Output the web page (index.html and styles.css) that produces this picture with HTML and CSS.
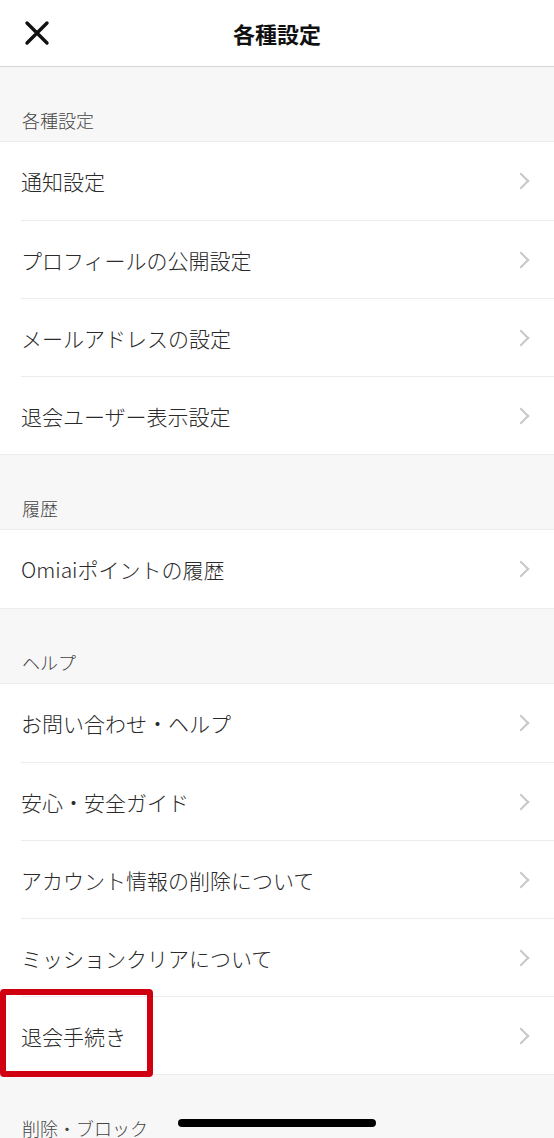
FILE: index.html
```html
<!DOCTYPE html>
<html lang="ja">
<head>
<meta charset="utf-8">
<title>各種設定</title>
<link rel="stylesheet" href="styles.css">
</head>
<body>
<div class="page">
  <header class="topbar">
    <button class="close" aria-label="閉じる">
      <svg width="26" height="26" viewBox="0 0 26 26"><path d="M3 3 L23 23 M23 3 L3 23" stroke="#111" stroke-width="3.4" stroke-linecap="round" fill="none"/></svg>
    </button>
    <h1 class="title">各種設定</h1>
    <span class="spacer"></span>
  </header>

  <div class="section-label">各種設定</div>
  <ul class="group">
    <li class="row"><span>通知設定</span><i class="chev"></i></li>
    <li class="row"><span>プロフィールの公開設定</span><i class="chev"></i></li>
    <li class="row"><span>メールアドレスの設定</span><i class="chev"></i></li>
    <li class="row"><span>退会ユーザー表示設定</span><i class="chev"></i></li>
  </ul>

  <div class="section-label">履歴</div>
  <ul class="group">
    <li class="row"><span>Omiaiポイントの履歴</span><i class="chev"></i></li>
  </ul>

  <div class="section-label">ヘルプ</div>
  <ul class="group">
    <li class="row"><span>お問い合わせ・ヘルプ</span><i class="chev"></i></li>
    <li class="row"><span>安心・安全ガイド</span><i class="chev"></i></li>
    <li class="row"><span>アカウント情報の削除について</span><i class="chev"></i></li>
    <li class="row"><span>ミッションクリアについて</span><i class="chev"></i></li>
    <li class="row highlighted"><span>退会手続き</span><i class="chev"></i><b class="mark"></b></li>
  </ul>

  <div class="section-label">削除・ブロック</div>

  <div class="home-indicator"></div>
</div>
</body>
</html>
```

FILE: styles.css
```css
html, body {
  margin: 0;
  padding: 0;
  background: #f7f7f7;
}
body {
  font-family: "Noto Sans CJK JP", "Noto Sans", sans-serif;
  color: #333;
  overflow: hidden;
}
.page {
  width: 554px;
  min-height: 1138px;
  background: #f7f7f7;
}
.topbar {
  height: 67px;
  background: #fff;
  border-bottom: 1px solid #d4d4d4;
  display: flex;
  align-items: center;
  padding: 0 22px 0 22px;
  box-sizing: border-box;
}
.close {
  width: 30px;
  height: 30px;
  padding: 0;
  margin: 0;
  border: 0;
  background: none;
  display: flex;
  align-items: center;
  justify-content: center;
}
.title {
  flex: 1;
  margin: 0;
  text-align: center;
  font-size: 22px;
  font-weight: 700;
  color: #111;
  line-height: 1;
}
.spacer {
  width: 30px;
}
.section-label {
  height: 74px;
  display: flex;
  align-items: flex-end;
  padding: 0 0 8px 22px;
  box-sizing: border-box;
  font-size: 18px;
  line-height: 26px;
  font-weight: 300;
  color: #444;
}
.group {
  list-style: none;
  margin: 0;
  padding: 0;
  background: #fff;
  border-top: 1px solid #ececec;
  border-bottom: 1px solid #ececec;
}
.row {
  position: relative;
  height: 78px;
  display: flex;
  align-items: center;
  justify-content: space-between;
  margin-left: 21px;
  padding-right: 24px;
  font-size: 21px;
  font-weight: 300;
  color: #2a2a2a;
  box-sizing: border-box;
}
.row + .row {
  border-top: 1px solid #ececec;
}
.chev {
  width: 10px;
  height: 10px;
  border-top: 2px solid #c8c8c8;
  border-right: 2px solid #c8c8c8;
  transform: rotate(45deg);
  margin-right: 3px;
}
.mark {
  position: absolute;
  left: -21px;
  top: -8px;
  width: 153px;
  height: 88px;
  border: 6px solid #d10010;
  border-radius: 4px;
  box-sizing: border-box;
}
.home-indicator {
  position: fixed;
  left: 178px;
  top: 1119px;
  width: 198px;
  height: 8px;
  border-radius: 4px;
  background: #000;
}
```
